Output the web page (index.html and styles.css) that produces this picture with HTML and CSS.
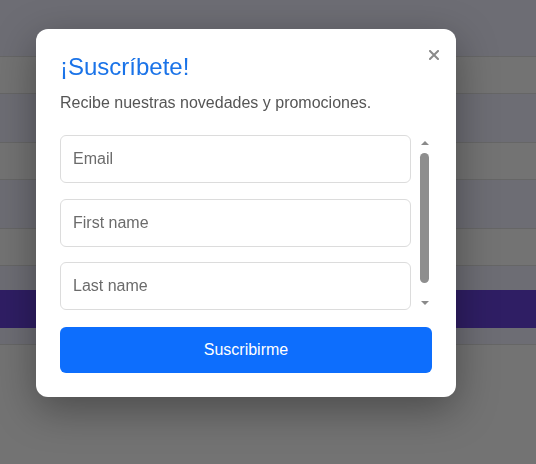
FILE: index.html
```html
<!DOCTYPE html>
<html lang="es">
<head>
<meta charset="utf-8">
<title>Suscríbete</title>
<link rel="stylesheet" href="styles.css">
</head>
<body>
<div class="page">
  <div class="band band-a h56"></div>
  <div class="band band-b h37 line"></div>
  <div class="band band-a h49 line"></div>
  <div class="band band-b h37 line"></div>
  <div class="band band-a h49 line"></div>
  <div class="band band-b h37 line"></div>
  <div class="band band-a h25 line"></div>
  <div class="band band-purple h38"></div>
  <div class="band band-a h16"></div>
  <div class="band band-b rest line"></div>
</div>

<div class="modal" role="dialog" aria-labelledby="modal-title">
  <button class="close" aria-label="Cerrar">
    <svg width="10" height="10" viewBox="0 0 10 10"><path d="M1 1L9 9M9 1L1 9" stroke="#8a8a8a" stroke-width="2" stroke-linecap="square"/></svg>
  </button>
  <h2 class="title" id="modal-title">¡Suscríbete!</h2>
  <p class="subtitle">Recibe nuestras novedades y promociones.</p>
  <form class="form">
    <div class="scroll-area">
      <div class="fields">
        <input class="field" type="email" placeholder="Email">
        <input class="field" type="text" placeholder="First name">
        <input class="field" type="text" placeholder="Last name">
      </div>
      <div class="scrollbar" aria-hidden="true">
        <div class="arrow arrow-up"></div>
        <div class="track"><div class="thumb"></div></div>
        <div class="arrow arrow-down"></div>
      </div>
    </div>
    <button class="submit" type="button">Suscribirme</button>
  </form>
</div>
</body>
</html>
```

FILE: styles.css
```css
html, body {
  margin: 0;
  padding: 0;
}
body {
  background: #747474;
  font-family: "Liberation Sans", Arial, sans-serif;
  height: 464px;
  overflow: hidden;
}
.page {
  display: flex;
  flex-direction: column;
  height: 464px;
}
.band { flex: none; }
.band-a { background: #6d6d74; }
.band-b { background: #737373; }
.band-purple { background: #2f1e64; }
.line { border-top: 1px solid #666; box-sizing: border-box; }
.h56 { height: 56px; }
.h37 { height: 37px; }
.h49 { height: 49px; }
.h25 { height: 25px; }
.h38 { height: 38px; }
.h16 { height: 16px; }
.rest { flex: 1; }

.modal {
  position: fixed;
  left: 36px;
  top: 29px;
  width: 420px;
  box-sizing: border-box;
  padding: 24px;
  background: #fff;
  border-radius: 12px;
  box-shadow: 0 12px 40px rgba(0, 0, 0, 0.35);
}
.close {
  position: absolute;
  top: 21px;
  right: 17px;
  width: 10px;
  height: 10px;
  padding: 0;
  border: 0;
  background: none;
  display: flex;
  cursor: pointer;
}
.title {
  margin: 0;
  font-size: 24px;
  line-height: 28px;
  font-weight: normal;
  color: #1a73e8;
}
.subtitle {
  margin: 12px 0 0;
  font-size: 16px;
  line-height: 20px;
  color: #555;
}
.form {
  margin-top: 22px;
  display: flex;
  flex-direction: column;
}
.scroll-area {
  display: flex;
  height: 175px;
}
.fields {
  flex: 1;
  min-width: 0;
  overflow: hidden;
  padding-right: 6px;
  display: flex;
  flex-direction: column;
  gap: 15.5px;
}
.field {
  flex: none;
  height: 48px;
  box-sizing: border-box;
  border: 1px solid #dcdcdc;
  border-radius: 6px;
  padding: 0 12px;
  font-family: "Liberation Sans", Arial, sans-serif;
  font-size: 16px;
  color: #333;
  background: #fff;
  outline: none;
}
.field::placeholder {
  color: #6b6b6b;
}
.scrollbar {
  flex: none;
  width: 15px;
  display: flex;
  flex-direction: column;
  background: #fff;
}
.arrow {
  flex: none;
  height: 15px;
  display: flex;
  justify-content: center;
  align-items: flex-start;
}
.arrow-up::before {
  content: "";
  margin-top: 6px;
  border-left: 4px solid transparent;
  border-right: 4px solid transparent;
  border-bottom: 4px solid #8a8a8a;
}
.arrow-down::before {
  content: "";
  margin-top: 6px;
  border-left: 4px solid transparent;
  border-right: 4px solid transparent;
  border-top: 4px solid #8a8a8a;
}
.track {
  flex: 1;
  display: flex;
  flex-direction: column;
  align-items: center;
  padding-top: 3px;
}
.thumb {
  width: 9px;
  height: 130px;
  border-radius: 5px;
  background: #8e8e8e;
}
.submit {
  margin-top: 17px;
  height: 46px;
  border: 0;
  border-radius: 6px;
  background: #0d6efd;
  color: #fff;
  font-family: "Liberation Sans", Arial, sans-serif;
  font-size: 16px;
  cursor: pointer;
}
```
